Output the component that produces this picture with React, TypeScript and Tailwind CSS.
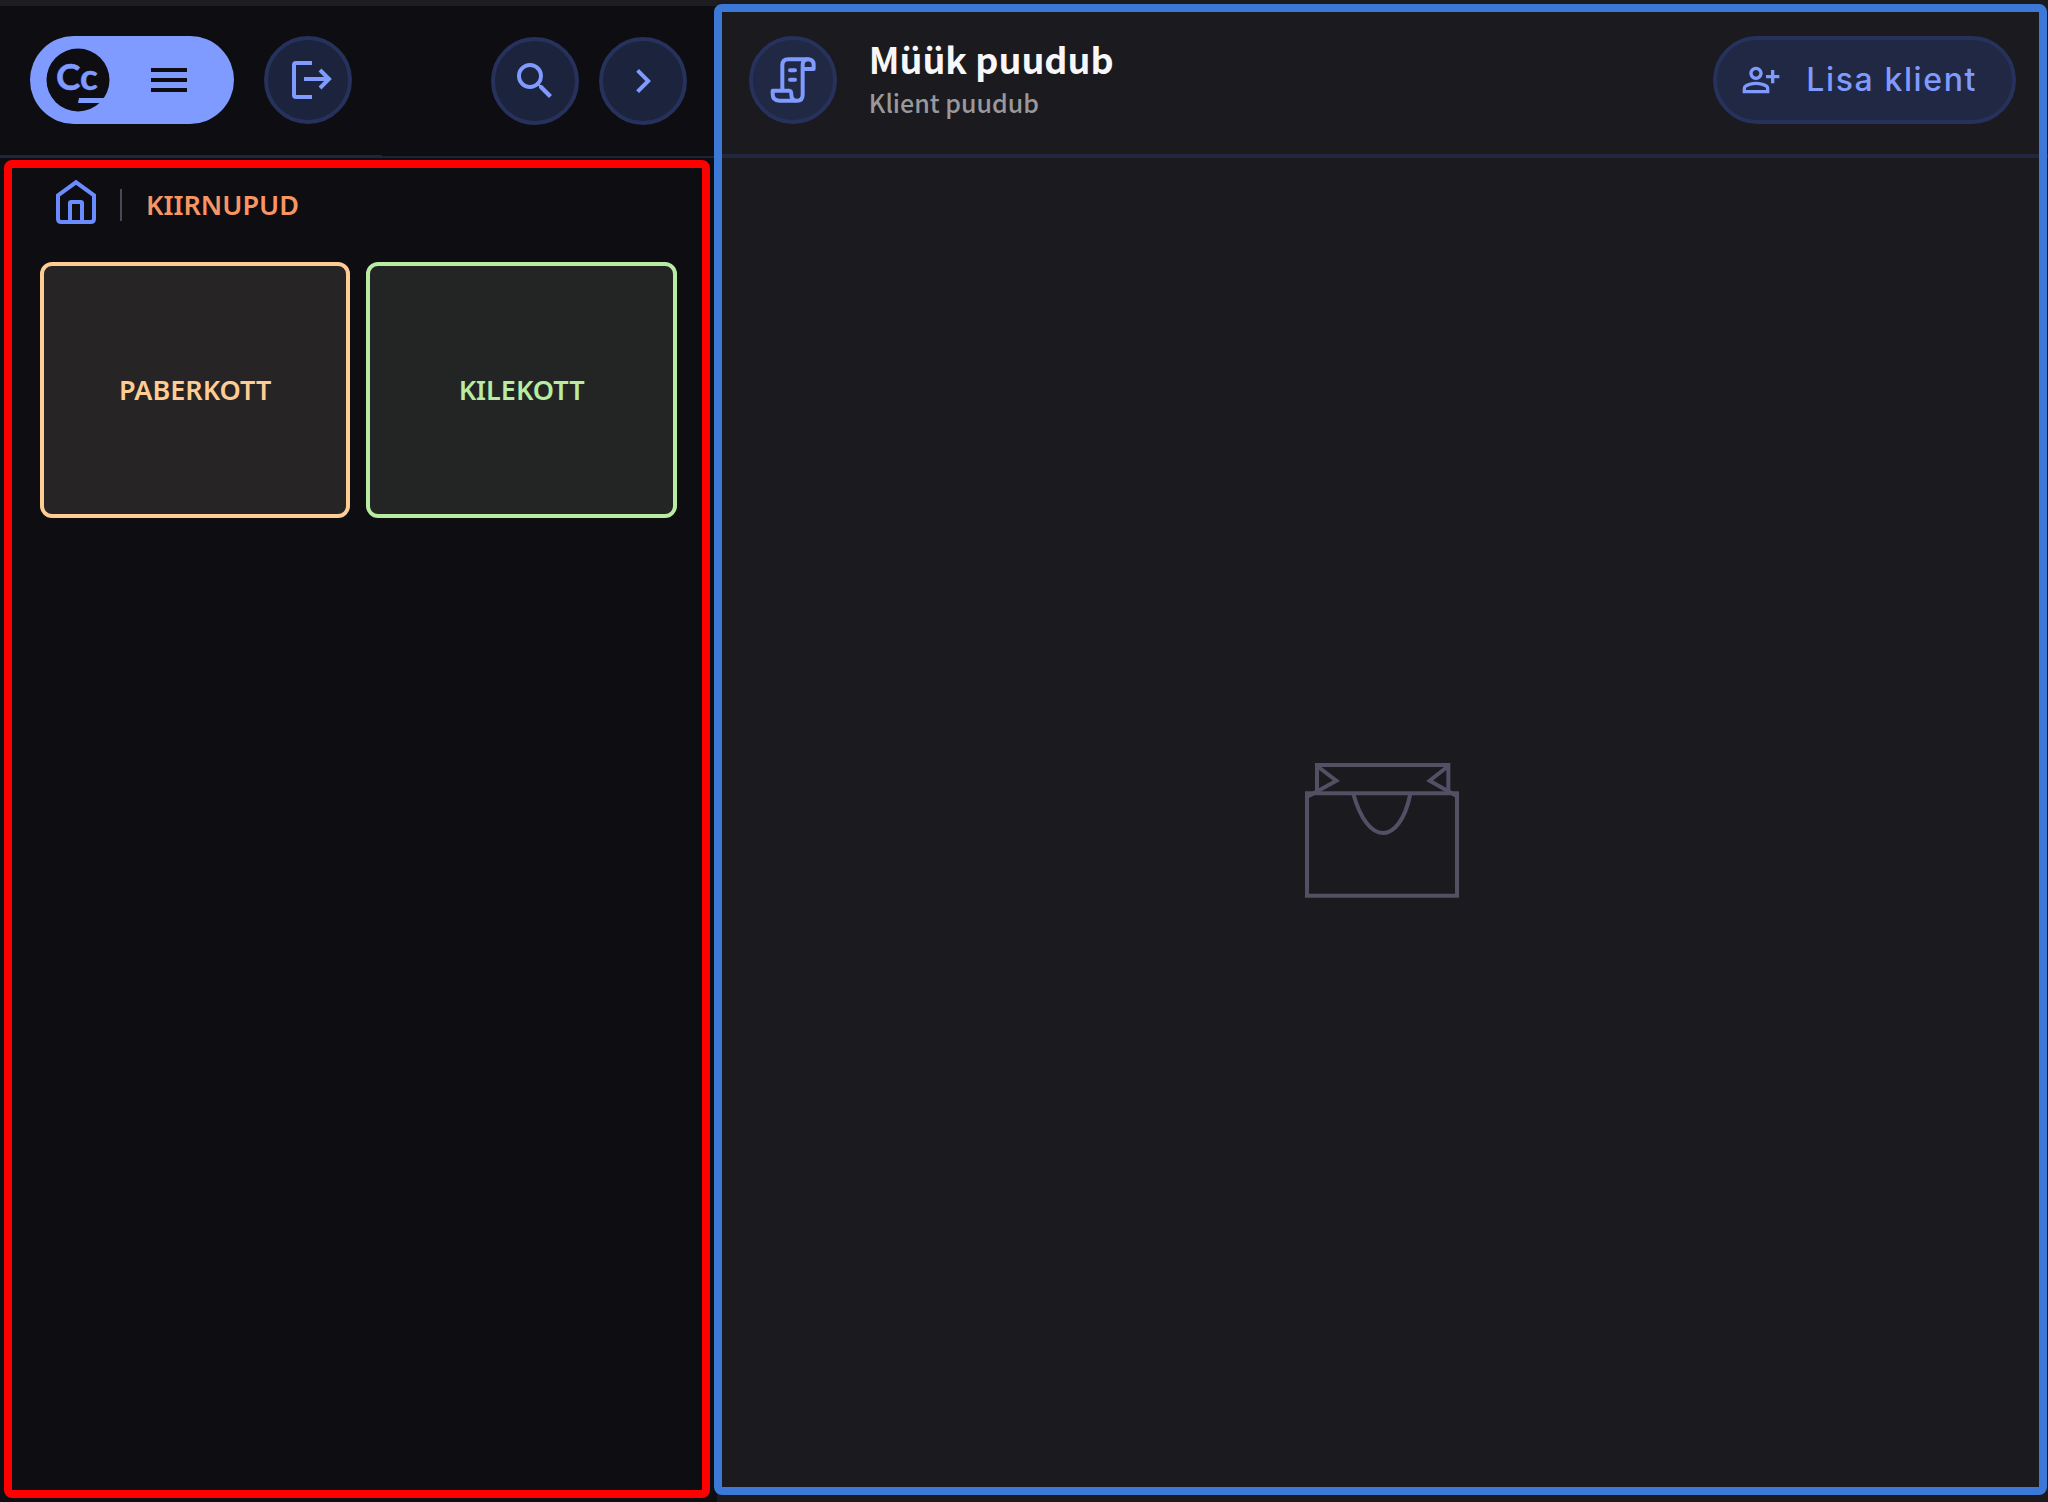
import type { ReactNode } from "react";
import {
  MdChevronRight,
  MdMenu,
  MdOutlinePersonAddAlt,
  MdSearch,
} from "react-icons/md";

const Logo = () => (
  <svg viewBox="0 0 64 64" className="size-16" role="img" aria-label="Cc">
    <circle cx="32" cy="32" r="31.5" fill="#0e0d12" />
    <text
      x="10"
      y="42"
      fill="#7f9bff"
      stroke="#7f9bff"
      strokeWidth="0.5"
      fontFamily="Lato, sans-serif"
      fontWeight="700"
      fontSize="37"
    >
      Cc
    </text>
    <path d="M33 50h27l-6 5H32z" fill="#7f9bff" />
  </svg>
);

const LogoutIcon = () => (
  <svg
    viewBox="0 0 48 48"
    className="size-12"
    fill="none"
    stroke="currentColor"
    strokeWidth="4"
  >
    <path d="M28 7H12q-2 0-2 2v30q0 2 2 2h16" />
    <path d="M20 23h26M36 14l9 9-9 9" />
  </svg>
);

const ScrollIcon = () => (
  <svg
    viewBox="150 171 138 138"
    className="size-[46px]"
    fill="none"
    stroke="currentColor"
    strokeWidth="12"
    strokeLinecap="round"
    strokeLinejoin="round"
  >
    <path d="M187 266v-70q0-18 18-18h58q18 0 18 17v12h-31" />
    <path d="M264 178q-16 0-16 18v88q0 18-17 18t-17-18q0-12-6-12h-50v10q0 20 20 20h53" />
    <path d="M210 211h15M210 239h15" />
  </svg>
);

const HomeIcon = () => (
  <svg
    viewBox="165 537 126 138"
    className="h-[46px] w-[42px]"
    fill="none"
    stroke="currentColor"
    strokeWidth="12"
  >
    <path d="M174 586l54-39 54 39v70q0 10-10 10h-88q-10 0-10-10z" />
    <path d="M210 666v-56q0-4 4-4h28q4 0 4 4v56" />
  </svg>
);

const BagIcon = () => (
  <svg
    viewBox="78 69 462 405"
    className="h-[135px] w-[154px]"
    fill="none"
    stroke="#535064"
    strokeWidth="12"
  >
    <path d="M84 160h450v307H84z" />
    <path d="M114 160V75h394v85" />
    <path d="M114 78l58 44-84 47M508 78l-56 44 82 47" />
    <path d="M223 162c22 78 56 117 89 117s66-39 82-117" />
  </svg>
);

const RoundButton = ({
  label,
  className,
  children,
}: {
  label: string;
  className: string;
  children: ReactNode;
}) => (
  <button
    aria-label={label}
    className={`flex size-[88px] shrink-0 items-center justify-center rounded-full border-4 border-[#26315c] text-[#7f9bff] ${className}`}
  >
    {children}
  </button>
);

const products = [
  { name: "PABERKOTT", style: "border-[#ffcd93] bg-[#262424] text-[#ffcd93]" },
  { name: "KILEKOTT", style: "border-[#b9eca3] bg-[#232524] text-[#b9eca3]" },
];

const Sidebar = () => (
  <aside className="flex w-[35%] shrink-0 flex-col border-t-[6px] border-[#1d1c21] bg-[#0e0d12]">
    <header className="flex h-[152px]">
      <div className="flex w-[382px] items-start gap-[30px] border-b-3 border-[#1f2640] pt-[30px] pl-[30px]">
        <button
          aria-label="Menüü"
          className="flex h-[88px] w-[204px] items-center rounded-full bg-[#7f9bff] pl-4 text-[#0e0d12]"
        >
          <Logo />
          <MdMenu className="ml-[35px] size-12" />
        </button>
        <RoundButton label="Logi välja" className="bg-[#1c233d]">
          <LogoutIcon />
        </RoundButton>
      </div>
      <div className="flex flex-1 items-start justify-end gap-5 border-b-2 border-[#1c2338] pt-[31px] pr-[30px]">
        <RoundButton label="Otsi" className="bg-[#1c233d]">
          <MdSearch className="size-12" />
        </RoundButton>
        <RoundButton label="Edasi" className="bg-[#1c233d]">
          <MdChevronRight className="size-12" />
        </RoundButton>
      </div>
    </header>

    <section className="mt-0.5 mr-[7px] mb-1 ml-1 flex-1 rounded-lg border-8 border-[#ff0000] pt-[11px] pr-[25px] pl-7">
      <nav className="flex items-end pl-[15px]">
        <a href="#" aria-label="Avaleht" className="text-[#6a8cff]">
          <HomeIcon />
        </a>
        <div className="ml-[23px] flex h-10 items-center gap-6">
          <span className="h-8 w-0.5 bg-[#4a4858]" />
          <h2 className="text-[27px] leading-8 font-semibold text-[#f79663]">
            KIIRNUPUD
          </h2>
        </div>
      </nav>
      <div className="mt-[37px] grid grid-cols-2 gap-4">
        {products.map((product) => (
          <button
            key={product.name}
            className={`h-64 rounded-xl border-4 text-[27px] font-semibold ${product.style}`}
          >
            {product.name}
          </button>
        ))}
      </div>
    </section>
  </aside>
);

const Sale = () => (
  <main className="relative flex flex-1 flex-col bg-[#1b1a1f]">
    <header className="flex h-[158px] items-start border-b-4 border-[#20273f] px-8 pt-9">
      <RoundButton label="Müügid" className="bg-[#212843]">
        <ScrollIcon />
      </RoundButton>
      <div className="ml-8 font-['Noto_Sans_CJK_SC','Noto_Sans',sans-serif] font-medium">
        <h1 className="text-[36px] leading-[44px] font-bold text-[#f7f7f7]">
          Müük puudub
        </h1>
        <p className="text-[25px] leading-[44px] text-[#99989b]">
          Klient puudub
        </p>
      </div>
      <button className="ml-auto flex h-[88px] items-center rounded-full border-4 border-[#26315c] bg-[#212843] pr-[35px] pl-6 font-[Inter,sans-serif] text-[32px] font-medium tracking-wider text-[#7f9bff]">
        <MdOutlinePersonAddAlt className="mr-[25px] size-10" />
        Lisa klient
      </button>
    </header>
    <div className="flex flex-1 items-center justify-center">
      <BagIcon />
    </div>
    {/* highlight frame over the whole panel */}
    <div className="pointer-events-none absolute top-1 right-px bottom-[7px] -left-[3px] rounded-lg border-8 border-[#3b78d8]" />
  </main>
);

export default function App() {
  return (
    <div className="flex min-h-screen font-['Noto_Sans',sans-serif]">
      <Sidebar />
      <Sale />
    </div>
  );
}
